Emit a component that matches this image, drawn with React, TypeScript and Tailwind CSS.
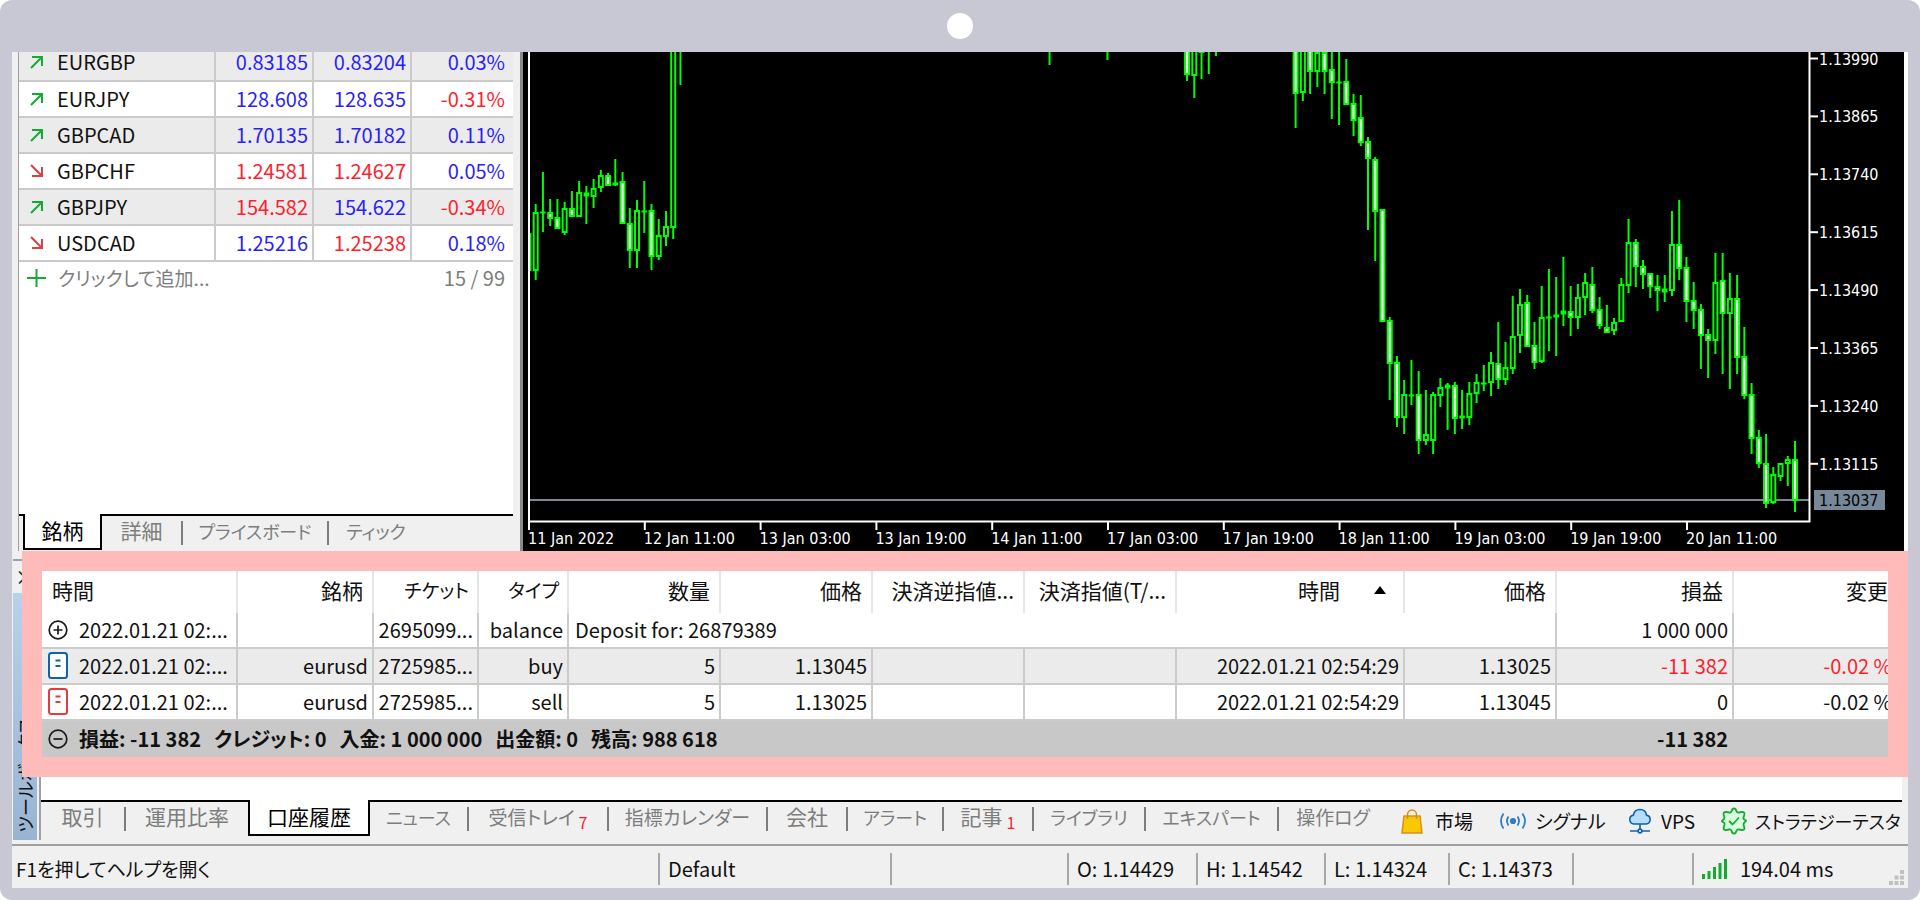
import type { ReactNode } from 'react'

type Quote = { symbol: string; up: boolean; bid: string; ask: string; change: string; bidUp: boolean; askUp: boolean }

const quotes: Quote[] = [
  { symbol: 'EURGBP', up: true, bid: '0.83185', ask: '0.83204', change: '0.03%', bidUp: true, askUp: true },
  { symbol: 'EURJPY', up: true, bid: '128.608', ask: '128.635', change: '-0.31%', bidUp: true, askUp: true },
  { symbol: 'GBPCAD', up: true, bid: '1.70135', ask: '1.70182', change: '0.11%', bidUp: true, askUp: true },
  { symbol: 'GBPCHF', up: false, bid: '1.24581', ask: '1.24627', change: '0.05%', bidUp: false, askUp: false },
  { symbol: 'GBPJPY', up: true, bid: '154.582', ask: '154.622', change: '-0.34%', bidUp: false, askUp: true },
  { symbol: 'USDCAD', up: false, bid: '1.25216', ask: '1.25238', change: '0.18%', bidUp: true, askUp: false },
]

// [index, high, low, body top, body bottom, falling]
const candles: [number, number, number, number, number, boolean][] = [
  [-1, 181, 219, 181, 219, true], [0, 152, 228, 160, 219, false], [1, 120, 180, 160, 160, false],
  [2, 147, 174, 160, 167, true], [3, 147, 177, 165, 177, true], [4, 150, 183, 156, 181, false],
  [5, 139, 165, 156, 165, true], [6, 129, 165, 140, 165, false], [7, 134, 172, 141, 145, false],
  [8, 127, 156, 136, 145, false], [9, 118, 140, 123, 136, false], [10, 121, 134, 123, 134, true],
  [11, 107, 134, 131, 134, true], [12, 120, 172, 129, 172, true], [13, 156, 216, 171, 199, true],
  [14, 148, 216, 158, 199, false], [15, 129, 181, 159, 159, false], [16, 152, 218, 158, 205, true],
  [17, 167, 208, 183, 205, false], [18, 159, 194, 174, 185, false], [19, -10, 187, -10, 176, false],
  [20, -10, 33, -10, -4, false], [71, -10, 13, -10, -4, false], [79, -10, 8, -10, -4, false],
  [90, -10, 29, -10, 23, true], [91, -10, 46, -10, 24, false], [92, -10, 27, -10, 1, false],
  [93, -10, 22, -10, -4, false], [94, -10, 4, -10, -4, false], [105, -10, 76, -10, 42, true],
  [106, -10, 49, -10, 41, false], [107, -10, 42, -10, 20, true], [108, -10, 35, 0, 20, false],
  [109, -10, 42, 0, 20, true], [110, -10, 67, 17, 31, true], [111, -10, 73, 30, 30, false],
  [112, 7, 53, 29, 53, true], [113, 42, 84, 51, 69, true], [114, 43, 94, 65, 91, true],
  [115, 85, 178, 89, 107, true], [116, 105, 209, 107, 160, true], [117, 157, 270, 157, 270, true],
  [118, 265, 348, 268, 312, true], [119, 304, 375, 310, 366, true], [120, 328, 382, 342, 366, false],
  [121, 308, 353, 343, 343, false], [122, 319, 402, 342, 389, true], [123, 338, 393, 382, 389, false],
  [124, 340, 402, 342, 389, false], [125, 326, 355, 335, 344, false], [126, 331, 378, 333, 337, false],
  [127, 330, 382, 333, 367, true], [128, 338, 377, 364, 367, false], [129, 330, 373, 341, 366, false],
  [130, 322, 351, 330, 342, false], [131, 313, 339, 331, 331, false], [132, 300, 344, 310, 331, false],
  [133, 270, 337, 311, 328, true], [134, 290, 333, 315, 328, false], [135, 244, 322, 284, 317, false],
  [136, 237, 301, 252, 284, false], [137, 243, 295, 250, 295, true], [138, 270, 317, 293, 311, true],
  [139, 234, 311, 265, 310, false], [140, 217, 299, 265, 265, false], [141, 225, 304, 263, 266, true],
  [142, 205, 274, 259, 263, false], [143, 234, 284, 259, 266, true], [144, 232, 277, 245, 266, false],
  [145, 221, 263, 230, 246, false], [146, 215, 261, 232, 259, true], [147, 245, 277, 257, 274, true],
  [148, 253, 281, 275, 281, true], [149, 266, 283, 270, 279, false], [150, 226, 270, 232, 270, false],
  [151, 167, 241, 190, 234, false], [152, 187, 235, 190, 215, true], [153, 208, 237, 214, 223, true],
  [154, 221, 246, 221, 235, true], [155, 223, 259, 234, 239, true], [156, 223, 250, 237, 241, false],
  [157, 159, 244, 192, 239, false], [158, 148, 228, 192, 217, true], [159, 205, 270, 215, 250, true],
  [160, 230, 277, 248, 259, true], [161, 252, 317, 257, 284, true], [162, 277, 326, 282, 289, true],
  [163, 201, 302, 230, 289, false], [164, 201, 322, 228, 262, true], [165, 221, 337, 246, 262, false],
  [166, 223, 322, 246, 306, true], [167, 275, 347, 304, 344, true], [168, 331, 402, 342, 387, true],
  [169, 378, 416, 385, 412, true], [170, 382, 456, 411, 452, true], [171, 415, 452, 422, 451, false],
  [172, 411, 429, 411, 425, false], [173, 404, 434, 407, 412, false], [174, 389, 460, 407, 449, true],
]

const prices = ['1.13990', '1.13865', '1.13740', '1.13615', '1.13490', '1.13365', '1.13240', '1.13115']
const dates = [
  '11 Jan 2022', '12 Jan 11:00', '13 Jan 03:00', '13 Jan 19:00', '14 Jan 11:00', '17 Jan 03:00',
  '17 Jan 19:00', '18 Jan 11:00', '19 Jan 03:00', '19 Jan 19:00', '20 Jan 11:00',
]

type TabItem = { label: string; style: string; active?: boolean; sep?: boolean; count?: number }

const watchTabs: TabItem[] = [
  { label: '銘柄', style: 'w-[79px] text-[21px]', active: true },
  { label: '詳細', style: 'w-[81px] text-[21px]', sep: true },
  { label: 'プライスボード', style: 'w-[146px] text-[18px]', sep: true },
  { label: 'ティック', style: 'w-[94px] text-[18px]' },
]

const toolTabs: TabItem[] = [
  { label: '取引', style: 'w-[85px] text-[21px]', sep: true },
  { label: '運用比率', style: 'w-[122px] text-[21px]' },
  { label: '口座履歴', style: 'w-[122px] text-[21px]', active: true },
  { label: 'ニュース', style: 'w-[99px] text-[18px]', sep: true },
  { label: '受信トレイ', style: 'w-[140px] text-[19px]', sep: true, count: 7 },
  { label: '指標カレンダー', style: 'w-[159px] text-[19px]', sep: true },
  { label: '会社', style: 'w-[80px] text-[21px]', sep: true },
  { label: 'アラート', style: 'w-[96px] text-[18px]', sep: true },
  { label: '記事', style: 'w-[90px] text-[21px]', sep: true, count: 1 },
  { label: 'ライブラリ', style: 'w-[112px] text-[18px]', sep: true },
  { label: 'エキスパート', style: 'w-[133px] text-[18px]', sep: true },
  { label: '操作ログ', style: 'w-[108px] text-[19px]' },
]

function Tab({ tab }: { tab: TabItem }) {
  if (tab.active) {
    return (
      <button
        role="tab"
        aria-selected="true"
        className={`h-9 shrink-0 border-x-2 border-b-2 border-black bg-white pb-1 leading-8 text-black ${tab.style}`}
      >
        {tab.label}
      </button>
    )
  }
  return (
    <button
      role="tab"
      aria-selected="false"
      className={`flex h-9 shrink-0 items-center justify-center border-t-2 border-black whitespace-nowrap text-[#7d7d7d] ${tab.style}`}
    >
      <span className="grow pb-1">
        {tab.label}
        {tab.count && <sub className="ml-1 text-base text-[#ff1e2d]">{tab.count}</sub>}
      </span>
      {tab.sep && <span className="h-6 w-[2px] bg-[#7d7d7d]" />}
    </button>
  )
}

function TrendArrow({ up }: { up: boolean }) {
  return (
    <svg width="15" height="14" viewBox="0 0 15 14" fill="none" strokeWidth="2" stroke={up ? '#14ab32' : '#dd4040'}>
      {up ? <path d="M3 2h10v9M13 2L2 13" /> : <path d="M3 12h10V3M13 12L2 1" />}
    </svg>
  )
}

function CircleIcon({ plus }: { plus?: boolean }) {
  return (
    <svg width="20" height="20" viewBox="0 0 20 20" fill="none" stroke="#1a1a1a" strokeWidth="1.7">
      <circle cx="10" cy="10" r="8.8" />
      <path d={plus ? 'M5.5 10h9M10 5.5v9' : 'M5.5 10h9'} />
    </svg>
  )
}

function DealIcon({ color }: { color: string }) {
  return (
    <svg width="20" height="28" viewBox="0 0 20 28" fill="#fff" stroke={color} strokeWidth="2">
      <rect x="1" y="1" width="18" height="25" rx="2.5" />
      <path d="M7.5 8.5h5M7.5 14h5" />
    </svg>
  )
}

function PriceChart() {
  const step = 7.2374
  return (
    <svg viewBox="0 0 1381 499" className="block w-full bg-black" role="img" aria-label="EURUSD H1">
      <path d="M0 448h1287" stroke="#778899" strokeWidth="2" />
      {candles.map(([i, high, low, top, bottom, falling]) => {
        const x = 12.7 + step * i
        const height = bottom - top
        return (
          <g key={i} stroke="#00ff00" strokeWidth="2">
            <path d={`M${x} ${high}V${low}`} />
            {height < 5 ? (
              <rect x={x - 2.8} y={top - 0.5} width="5.6" height={Math.max(height, 2)} fill="#00ff00" stroke="none" />
            ) : (
              <rect x={x - 2} y={top + 1} width="4" height={height - 2} fill={falling ? '#fff' : '#000'} />
            )}
          </g>
        )
      })}
      <path d="M0 0h5v499H0z" fill="#000" />
      <path d="M6 0v477M6 469.5h1280.5V0" fill="none" stroke="#fff" strokeWidth="2" />
      <g fontFamily="'DejaVu Sans Condensed', 'Noto Sans', sans-serif" fontSize="16" fill="#fff">
        {dates.map((date, i) => (
          <g key={date}>
            <path d={`M${6 + i * 115.8} 469v9`} stroke="#fff" strokeWidth="2" />
            <text x={5 + i * 115.8} y="492">{date}</text>
          </g>
        ))}
        {prices.map((price, i) => (
          <g key={price}>
            <path d={`M1287 ${6.5 + i * 57.9}h8`} stroke="#fff" strokeWidth="2" />
            <text x="1296" y={12.5 + i * 57.9}>{price}</text>
          </g>
        ))}
        <path d="M1291 438h71v20h-71z" fill="#778899" />
        <text x="1296" y="454" fill="#000">1.13037</text>
      </g>
    </svg>
  )
}

function MarketWatch() {
  const tone = (up: boolean) => (up ? 'text-[#2a1eff]' : 'text-[#ff1e2d]')
  return (
    <div className="flex w-[511px] shrink-0 border-r-[3px] border-[#8a8a8a] bg-[#f0f0f0] pr-[7px] pl-[6px]">
      <div className="flex min-w-0 grow flex-col border-l border-[#a0a0a0] bg-white">
        <table className="w-full table-fixed border-separate border-spacing-0 text-[20px] leading-5">
          <colgroup>
            <col className="w-[197px]" />
            <col className="w-[98px]" />
            <col className="w-[98px]" />
            <col />
          </colgroup>
          <tbody>
            {quotes.map((q) => (
              <tr key={q.symbol} className="h-9 odd:bg-[#ebebeb] first:h-[30px] first:*:pb-2">
                <th scope="row" className="border-r-2 border-b-2 border-[#cbcbcb] p-0 text-left font-normal">
                  <div className="flex items-center gap-[13px] pl-[10px]">
                    <TrendArrow up={q.up} />
                    {q.symbol}
                  </div>
                </th>
                <td className={`border-r-2 border-b-2 border-[#cbcbcb] p-0 pr-1 text-right ${tone(q.bidUp)}`}>{q.bid}</td>
                <td className={`border-r-2 border-b-2 border-[#cbcbcb] p-0 pr-1 text-right ${tone(q.askUp)}`}>{q.ask}</td>
                <td className={`border-b-2 border-[#cbcbcb] p-0 pr-2 text-right ${tone(!q.change.startsWith('-'))}`}>
                  {q.change}
                </td>
              </tr>
            ))}
          </tbody>
        </table>
        <div className="flex h-9 items-center pr-2 pb-1 pl-2 text-[20px] text-[#7d7d7d]">
          <svg width="19" height="18" viewBox="0 0 19 18" stroke="#14ab32" strokeWidth="2">
            <path d="M0 9h19M9.5 0v18" />
          </svg>
          <button className="ml-3 text-[19px]">クリックして追加...</button>
          <span className="ml-auto">15 / 99</span>
        </div>
        <div className="grow" />
        <div role="tablist" className="flex h-[37px] bg-[#f0f0f0]">
          <div className="h-9 w-1 border-t-2 border-black" />
          {watchTabs.map((tab) => (
            <Tab key={tab.label} tab={tab} />
          ))}
          <div className="h-9 grow border-t-2 border-black" />
        </div>
      </div>
    </div>
  )
}

function HeadCell({ children, className = 'pr-[9px] text-right' }: { children: ReactNode; className?: string }) {
  return (
    <th scope="col" className={`overflow-hidden border-r-2 border-[#e6e6e6] p-0 pb-1 font-normal whitespace-nowrap last:border-r-0 ${className}`}>
      {children}
    </th>
  )
}

function Cell({ children, className = 'pr-1 text-right', span }: { children?: ReactNode; className?: string; span?: number }) {
  return (
    <td
      colSpan={span}
      className={`overflow-hidden border-r-2 border-b-2 border-[#cbcbcb] p-0 whitespace-nowrap last:border-r-0 ${className}`}
    >
      {children}
    </td>
  )
}

function TimeCell({ icon, children }: { icon: ReactNode; children: ReactNode }) {
  return (
    <Cell>
      <div className="flex items-center gap-[11px] pl-[7px]">
        {icon}
        {children}
      </div>
    </Cell>
  )
}

function History() {
  return (
    <table className="w-full table-fixed border-separate border-spacing-0 text-[20px] leading-8">
      <colgroup>
        <col className="w-[197px]" />
        <col className="w-[136px]" />
        <col className="w-[105px]" />
        <col className="w-[90px]" />
        <col className="w-[152px]" />
        <col className="w-[152px]" />
        <col className="w-[152px]" />
        <col className="w-[152px]" />
        <col className="w-[228px]" />
        <col className="w-[152px]" />
        <col className="w-[177px]" />
        <col />
      </colgroup>
      <thead>
        <tr className="h-[42px] text-[21px]">
          <HeadCell className="pl-[11px] text-left">時間</HeadCell>
          <HeadCell>銘柄</HeadCell>
          <HeadCell className="pr-2 text-right text-[19px]">チケット</HeadCell>
          <HeadCell className="pr-2 text-right text-[19px]">タイプ</HeadCell>
          <HeadCell>数量</HeadCell>
          <HeadCell>価格</HeadCell>
          <HeadCell>決済逆指値...</HeadCell>
          <HeadCell>決済指値(T/...</HeadCell>
          <HeadCell>
            <span className="flex items-center justify-end gap-[34px] pr-2">
              時間
              <svg width="12" height="8" viewBox="0 0 12 8">
                <path d="M6 0l6 8H0z" />
              </svg>
            </span>
          </HeadCell>
          <HeadCell>価格</HeadCell>
          <HeadCell>損益</HeadCell>
          <HeadCell className="pr-[14px] text-right">変更</HeadCell>
        </tr>
      </thead>
      <tbody>
        <tr className="h-9">
          <TimeCell icon={<CircleIcon plus />}>2022.01.21 02:...</TimeCell>
          <Cell />
          <Cell>2695099...</Cell>
          <Cell>balance</Cell>
          <Cell span={6} className="pl-[6px] text-left">Deposit for: 26879389</Cell>
          <Cell>1 000 000</Cell>
          <Cell />
        </tr>
        <tr className="h-9 bg-[#ebebeb]">
          <TimeCell icon={<DealIcon color="#0f62ac" />}>2022.01.21 02:...</TimeCell>
          <Cell>eurusd</Cell>
          <Cell>2725985...</Cell>
          <Cell>buy</Cell>
          <Cell>5</Cell>
          <Cell>1.13045</Cell>
          <Cell />
          <Cell />
          <Cell>2022.01.21 02:54:29</Cell>
          <Cell>1.13025</Cell>
          <Cell className="pr-1 text-right text-[#ff1e2d]">-11 382</Cell>
          <Cell className="pr-[10px] text-right text-[#ff1e2d]">-0.02 %</Cell>
        </tr>
        <tr className="h-9">
          <TimeCell icon={<DealIcon color="#e23c3c" />}>2022.01.21 02:...</TimeCell>
          <Cell>eurusd</Cell>
          <Cell>2725985...</Cell>
          <Cell>sell</Cell>
          <Cell>5</Cell>
          <Cell>1.13025</Cell>
          <Cell />
          <Cell />
          <Cell>2022.01.21 02:54:29</Cell>
          <Cell>1.13045</Cell>
          <Cell>0</Cell>
          <Cell className="pr-[10px] text-right">-0.02 %</Cell>
        </tr>
      </tbody>
      <tfoot>
        <tr className="h-9 bg-[#c8c8c8] font-semibold">
          <td colSpan={10} className="p-0">
            <div className="flex items-center gap-[11px] pl-[7px]">
              <CircleIcon />
              <div className="flex gap-[13px]">
                <span>損益: -11 382</span>
                <span>クレジット: 0</span>
                <span>入金: 1 000 000</span>
                <span>出金額: 0</span>
                <span>残高: 988 618</span>
              </div>
            </div>
          </td>
          <td className="p-0 pr-[6px] text-right">-11 382</td>
          <td />
        </tr>
      </tfoot>
    </table>
  )
}

function BagIcon() {
  return (
    <svg width="22" height="26" viewBox="0 0 22 26" fill="none" stroke="#d98e1c" strokeWidth="1.5">
      <path d="M3 8h16l2 17H1z" fill="#fac800" />
      <path d="M6.5 11V6.5a4.5 4.5 0 0 1 9 0V11" />
    </svg>
  )
}

function SignalIcon() {
  return (
    <svg width="28" height="18" viewBox="0 0 28 18" fill="none" stroke="#2d7cc4" strokeWidth="1.8">
      <circle cx="14" cy="9" r="2.2" fill="#2d7cc4" />
      <path d="M9.5 4.5q-3 4.5 0 9M18.5 4.5q3 4.5 0 9M4.5 1.5q-5 7.5 0 15M23.5 1.5q5 7.5 0 15" />
    </svg>
  )
}

function CloudIcon() {
  return (
    <svg width="24" height="26" viewBox="0 0 24 26" fill="none" stroke="#0f62ac" strokeWidth="1.6">
      <path d="M6 16a4.5 4.5 0 0 1-.6-8.9C6 3.5 8.7 1.5 12 1.5s6 2.2 6.5 5.6A4.5 4.5 0 0 1 18 16z" fill="#b5defc" />
      <path d="M12 16v5M2 23h8M14 23h8" />
      <circle cx="12" cy="23" r="1.9" />
    </svg>
  )
}

function TesterIcon() {
  return (
    <svg width="26" height="28" viewBox="0 0 26 28" fill="none" stroke="#14ab32" strokeWidth="1.8">
      <path
        d="M13 1.5q1.800 0 2.300 2.200t2.700 1.800l3-.7q3 .2 2.300 3l-.8 2.700q-.4 1.500 1.200 2.300t1.300 1.200-1.300 1.200-1.200 2.300l.8 2.700q.7 2.800-2.300 3l-3-.7q-2.200-.4-2.700 1.800T13 26.500t-2.300-2.200T8 22.500l-3 .7q-3-.2-2.300-3l.8-2.700q.4-1.500-1.200-2.300T1 14t1.300-1.200 1.200-2.300l-.8-2.700q-.7-2.800 2.300-3l3 .7q2.200.4 2.700-1.800T13 1.500z"
        fill="#d9ffdc"
        strokeLinejoin="round"
      />
      <path d="M8 14l3.500 3.500L18 10.500" />
    </svg>
  )
}

function Toolbox() {
  return (
    <div className="relative flex bg-[#f0f0f0] pr-[6px] pb-1">
      <div className="flex w-[29px] shrink-0 flex-col border-r-2 border-[#a0a0a0] pr-[2px] pl-px">
        <div className="mt-2 flex h-[34px] items-center justify-center border-t-2 border-[#a0a0a0]">
          <button aria-label="閉じる" className="text-xl leading-none">×</button>
        </div>
        <div className="flex grow items-end justify-center bg-linear-to-b from-[#b9d1ea] to-[#99b4d1] pb-2">
          <span className="rotate-180 text-[18px] leading-6 whitespace-nowrap [text-orientation:sideways] [writing-mode:vertical-rl]">
            ツールボックス
          </span>
        </div>
      </div>
      <div className="min-w-0 grow overflow-hidden bg-white pt-5">
        <History />
        <div className="h-[43px]" />
        <div role="tablist" className="flex h-10 bg-[#f0f0f0]">
          {toolTabs.map((tab) => (
            <Tab key={tab.label} tab={tab} />
          ))}
          <div className="flex h-9 min-w-0 grow items-center overflow-hidden border-t-2 border-black pt-1 pl-[14px] text-[19px] whitespace-nowrap">
            <button className="flex w-[98px] shrink-0 items-center gap-3">
              <BagIcon />
              市場
            </button>
            <button className="flex w-[129px] shrink-0 items-center gap-2">
              <SignalIcon />
              シグナル
            </button>
            <button className="flex w-[93px] shrink-0 items-center gap-[9px]">
              <CloudIcon />
              VPS
            </button>
            <button className="flex shrink-0 items-center gap-2 text-[18px]">
              <TesterIcon />
              ストラテジーテスター
            </button>
          </div>
        </div>
      </div>
      {/* highlight around the account history */}
      <div className="pointer-events-none absolute top-0 right-0 left-[10px] h-[226px] border-[20px] border-[#ffbaba]" />
    </div>
  )
}

function StatusItem({ children, className }: { children?: ReactNode; className: string }) {
  return (
    <div className={`flex h-8 shrink-0 items-center border-l-2 border-[#a8a8a8] pl-2 whitespace-nowrap ${className}`}>
      {children}
    </div>
  )
}

function StatusBar() {
  return (
    <footer className="flex h-11 items-center border-t-2 border-[#a0a0a0] bg-[#f0f0f0] pt-1 text-[20px]">
      <div className="min-w-0 grow pl-1 text-[19px]">F1を押してヘルプを開く</div>
      <StatusItem className="w-[232px]">Default</StatusItem>
      <StatusItem className="w-[177px]" />
      <StatusItem className="w-[129px]">O: 1.14429</StatusItem>
      <StatusItem className="w-[128px]">H: 1.14542</StatusItem>
      <StatusItem className="w-[124px]">L: 1.14324</StatusItem>
      <StatusItem className="w-[124px]">C: 1.14373</StatusItem>
      <StatusItem className="w-[120px]" />
      <StatusItem className="w-[216px] gap-3">
        <svg width="26" height="20" viewBox="0 0 26 20" fill="#14ab32">
          <path d="M0 15h3v5H0zM5.5 12h3v8h-3zM11 8h3v12h-3zM16.5 4h3v16h-3zM22 0h3v20h-3z" />
        </svg>
        <span className="grow">194.04 ms</span>
        <svg width="15" height="15" viewBox="0 0 15 15" fill="#c0c0c0" className="mr-1 self-end">
          <path d="M11 0h4v4h-4zM11 5.5h4v4h-4zM5.5 5.5h4v4h-4zM11 11h4v4h-4zM5.5 11h4v4h-4zM0 11h4v4H0z" />
        </svg>
      </StatusItem>
    </footer>
  )
}

export default function App() {
  return (
    <div className="bg-white">
      <div className="rounded-xl bg-[#c8c8d4] px-3 pb-3 font-['Noto_Sans_CJK_JP','Noto_Sans',sans-serif] text-[#111] [font-feature-settings:'palt']">
        <div className="flex h-[52px] items-center justify-center">
          <div className="size-[26px] rounded-full bg-white" />
        </div>
        <div className="bg-[#f0f0f0]">
          <div className="flex">
            <MarketWatch />
            <div className="min-w-0 grow border-r-4 border-white bg-black">
              <PriceChart />
            </div>
          </div>
          <Toolbox />
          <StatusBar />
        </div>
      </div>
    </div>
  )
}
